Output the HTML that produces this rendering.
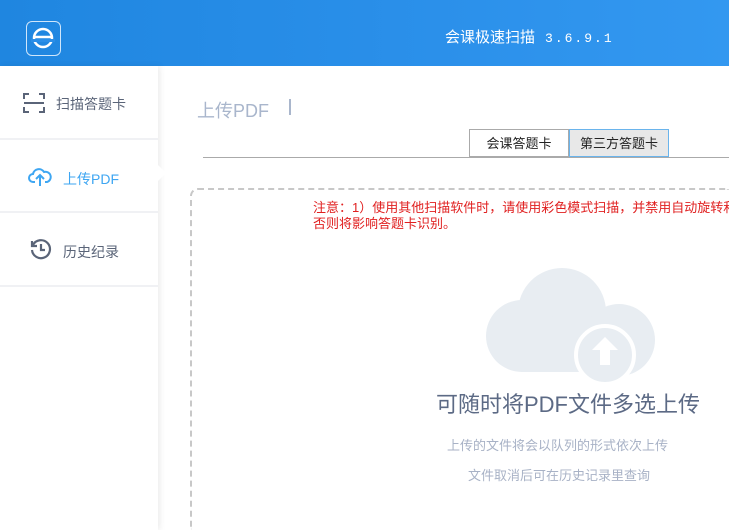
<!DOCTYPE html>
<html><head><meta charset="utf-8"><style>
*{margin:0;padding:0;box-sizing:border-box}
html,body{width:729px;height:530px;overflow:hidden}
body{background:#fff;font-family:"Liberation Sans","Noto Sans CJK SC",sans-serif;position:relative}
.hdr{position:absolute;left:0;top:0;width:729px;height:66px;background:linear-gradient(90deg,#1f86e0,#2b90ea 60%,#3398f0)}
.logo{position:absolute;left:26px;top:21px;width:35px;height:35px;border:1.5px solid #cfe6fb;border-radius:6px}
.ttl{position:absolute;left:445px;top:26px;color:#fff;font-size:15px}
.ttl span{font-family:"Liberation Mono",monospace;font-size:13px;margin-left:10px;letter-spacing:2px}
.side{position:absolute;left:0;top:66px;width:158px;height:464px;background:#fff;box-shadow:2px 0 6px rgba(0,0,0,.08)}
.it{position:absolute;left:0;width:158px;height:74px;border-bottom:2px solid #f0f1f4;font-size:14px;color:#5a6478}
.it span{position:absolute;top:28px}
.main-t{position:absolute;left:197px;top:97px;font-size:18px;color:#a9b6cc}
.bar{position:absolute;left:289px;top:99px;width:2px;height:16px;background:#a9b6cc}
.tab{position:absolute;top:129px;height:28px;border:1px solid #aaa;font-size:13px;text-align:center;line-height:27px;color:#222}
.line{position:absolute;left:203px;top:157px;width:526px;height:1px;background:#aaa}
.box{position:absolute;left:190px;top:188px;width:539px;height:342px;border:2px dashed #c8c8c8;border-right:none;border-bottom:none;border-radius:8px 0 0 0}
.note{position:absolute;left:313px;top:200px;font-size:13px;color:#e02020;line-height:16px;white-space:nowrap;width:416px;overflow:hidden}
.big{position:absolute;left:436px;top:387px;font-size:22px;color:#5c6a85}
.sub{position:absolute;font-size:13px;color:#a8b2c6}
</style></head><body>
<div class="hdr">
<div class="logo"><svg width="32" height="32" viewBox="0 0 32 32"><circle cx="16" cy="16" r="9" fill="none" stroke="#fff" stroke-width="2.5"/><line x1="6" y1="15" x2="26" y2="15" stroke="#fff" stroke-width="2.5"/><rect x="4" y="17" width="24" height="3" fill="#2a8ee8"/></svg></div>
<div class="ttl">会课极速扫描<span>3.6.9.1</span></div>
</div>
<div class="side">
<div class="it" style="top:0"><svg style="position:absolute;left:23px;top:27px" width="22" height="20" viewBox="0 0 22 20" fill="none" stroke="#5a6478" stroke-width="2"><path d="M1 6V1h5M16 1h5v5M21 14v5h-5M6 19H1v-5M1 10h20"/></svg><span style="left:56px">扫描答题卡</span></div>
<div class="it" style="top:75px;height:72px;color:#3ea6f2"><svg style="position:absolute;left:28px;top:26px" width="24" height="20" viewBox="0 0 24 20" fill="none" stroke="#3ea6f2" stroke-width="2"><path d="M7 15H5a4 4 0 0 1 0-8 6 6 0 0 1 11-2 5 5 0 0 1 3 10h-2M12 19V9M8 12l4-4 4 4"/></svg><span style="left:63px">上传PDF</span></div>
<div class="it" style="top:148px;height:73px"><svg style="position:absolute;left:29px;top:23px" width="24" height="24" viewBox="0 0 24 24" fill="none" stroke="#5a6478" stroke-width="2.2"><path d="M4 8a9 9 0 1 1-1 5M3 4v5h5M12 7v6h4"/></svg><span style="left:63px">历史纪录</span></div>
</div>
<div style="position:absolute;left:158px;top:165px;width:0;height:0;border:8px solid transparent;border-left-color:#fff"></div>
<div class="main-t">上传PDF</div><div class="bar"></div>
<div class="tab" style="left:469px;width:100px;background:#fff">会课答题卡</div>
<div class="tab" style="left:569px;width:100px;background:#e8e8e8;border-color:#6ab4ec">第三方答题卡</div>
<div class="line"></div>
<div class="box"></div>
<div class="note">注意：1）使用其他扫描软件时，请使用彩色模式扫描，并禁用自动旋转和<br>否则将影响答题卡识别。</div>
<svg style="position:absolute;left:484px;top:262px" width="175" height="128" viewBox="0 0 175 128"><g fill="#e8edf2"><circle cx="78" cy="50" r="44"/><circle cx="38" cy="74" r="36"/><circle cx="135" cy="78" r="36"/><rect x="38" y="60" width="97" height="50"/></g><circle cx="121" cy="93" r="29" fill="#e8edf2" stroke="#fff" stroke-width="4"/><path d="M121 75l-13 13h8v15h10V88h8z" fill="#fff"/></svg>
<div class="big">可随时将PDF文件多选上传</div>
<div class="sub" style="left:447px;top:435px">上传的文件将会以队列的形式依次上传</div>
<div class="sub" style="left:468px;top:465px">文件取消后可在历史记录里查询</div>
</body></html>
